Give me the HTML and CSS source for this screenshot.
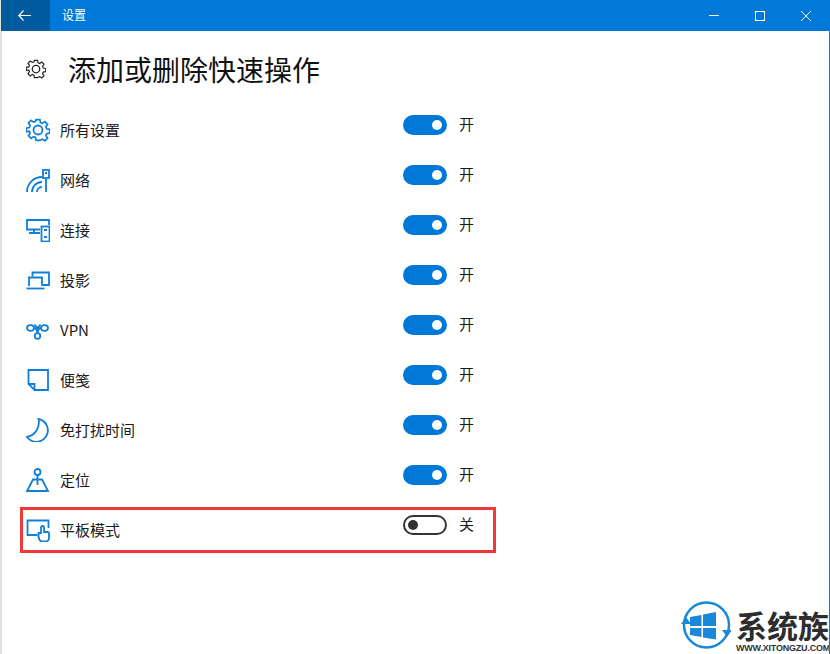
FILE: index.html
```html
<!DOCTYPE html>
<html lang="zh-CN">
  <head>
    <meta charset="utf-8">
    <title>设置</title>
    <link rel="stylesheet" href="styles.css">
  </head>
  <body>
    <div class="window">
      <header class="titlebar">
        <div class="back">
          <svg width="13" height="11" viewBox="0 0 13 11"><path d="M5.500.5.800 5.500l4.700 5M.800 5.500H13" fill="none" stroke="#fff" stroke-width="1.200"/></svg>
        </div>
        <span class="app-name">设置</span>
        <div class="controls">
          <svg width="12" height="12" viewBox="0 0 12 12"><path d="M1 5.500h10" stroke="#fff" fill="none"/></svg>
          <svg width="12" height="12" viewBox="0 0 12 12"><rect x="1.500" y="1.500" width="9" height="9" stroke="#fff" fill="none"/></svg>
          <svg width="12" height="12" viewBox="0 0 12 12"><path d="M1 1l10 10M11 1 1 11" stroke="#fff" fill="none"/></svg>
        </div>
      </header>

      <main class="content">
        <div class="page-head">
          <svg class="head-icon" width="20" height="20" viewBox="0 0 24 24"><use href="#gear"/></svg>
          <h1>添加或删除快速操作</h1>
        </div>

        <div class="list">
          <div class="row">
            <svg class="icon" viewBox="0 0 24 24"><use href="#gear"/></svg>
            <span class="name">所有设置</span>
            <span class="toggle on"></span><span class="state">开</span>
          </div>
          <div class="row">
            <svg class="icon" viewBox="0 0 24 24"><path d="M1 24A15 15 0 0 1 16 9M6 24A10 10 0 0 1 16 14M11 24A5 5 0 0 1 16 19"/><rect x="17" y="2" width="6" height="8"/><path d="M20 10v14M19 5h2"/></svg>
            <span class="name">网络</span>
            <span class="toggle on"></span><span class="state">开</span>
          </div>
          <div class="row">
            <svg class="icon" viewBox="0 0 24 24"><path d="M23 7V2H1v9.500h13M8 11.500V15M3 15h11"/><rect x="15.500" y="8.500" width="8" height="15"/><path d="M18 12h3M18 19h3"/></svg>
            <span class="name">连接</span>
            <span class="toggle on"></span><span class="state">开</span>
          </div>
          <div class="row">
            <svg class="icon" viewBox="0 0 24 24"><path d="M6.500 8.500V4.500h16.500v12.500h-6"/><path d="M3 18V9.500h13V18"/><path d="M.500 20.500h18"/></svg>
            <span class="name">投影</span>
            <span class="toggle on"></span><span class="state">开</span>
          </div>
          <div class="row">
            <svg class="icon" viewBox="0 0 24 24"><ellipse cx="4.500" cy="10" rx="3.500" ry="2.800"/><ellipse cx="18.500" cy="10" rx="3.500" ry="2.800"/><circle cx="11.500" cy="18" r="2.800"/><path d="M8 10c2 0 3 2 3.500 5.200M15 10c-2 0-3 2-3.500 5.200M8.500 6.500l3 3.500 3-3.500"/></svg>
            <span class="name">VPN</span>
            <span class="toggle on"></span><span class="state">开</span>
          </div>
          <div class="row">
            <svg class="icon" viewBox="0 0 24 24"><path d="M2.500 2h19.500v20H8.500l-6-6z"/><path d="M2.500 16h6v6"/></svg>
            <span class="name">便笺</span>
            <span class="toggle on"></span><span class="state">开</span>
          </div>
          <div class="row">
            <svg class="icon" viewBox="0 0 24 24"><path d="M12.500 1A11.500 11.500 0 1 1 1 19 15 15 0 0 0 12.500 1z"/></svg>
            <span class="name">免打扰时间</span>
            <span class="toggle on"></span><span class="state">开</span>
          </div>
          <div class="row">
            <svg class="icon" viewBox="0 0 24 24"><circle cx="11.500" cy="4" r="3"/><path d="M11.500 7v10"/><path d="M7 11.500h9L22 23H1z"/></svg>
            <span class="name">定位</span>
            <span class="toggle on"></span><span class="state">开</span>
          </div>
          <div class="row">
            <svg class="icon" viewBox="0 0 24 24"><path d="M11.500 17H1.500V2.500h21V10"/><path d="M15.500 23.500c-2-1-3-3-3-5.500v-3h2.500V9.500a1.500 1.500 0 0 1 3 0V14h3.500a1.500 1.500 0 0 1 1.500 1.500V20c0 1.500-1 3-2 3.500z"/></svg>
            <span class="name">平板模式</span>
            <span class="toggle off"></span><span class="state">关</span>
          </div>
          <div class="highlight"></div>
        </div>
      </main>

      <div class="watermark">
        <svg class="mark-logo" width="50" height="50" viewBox="0 0 50 50">
          <circle cx="25.500" cy="25" r="22.500" fill="none" stroke="#1a88d8" stroke-width="2.500"/>
          <path d="M0 24l5-7 5 7zM41 30l5 7 5-7z" fill="#1a88d8"/>
          <path d="M9 17l11.500-2v11H9zM22 14.500 35 12v14H22zM9 28h11.500v9L9 35zM22 28h13v11.500l-13-2z" fill="#1a88d8"/>
        </svg>
        <div class="mark-text">
          <span class="mark-name">系统族</span>
          <span class="mark-url">WWW.XITONGZU.COM</span>
        </div>
      </div>
    </div>

    <svg class="defs" width="0" height="0">
      <defs>
        <g id="gear">
          <circle cx="12" cy="12" r="4.500"/>
          <path d="M10 1h4l.6 3.200 2 .8 2.700-1.800 2.800 2.800-1.800 2.700.8 2 3.200.6v4l-3.200.6-.8 2 1.800 2.700-2.800 2.800-2.700-1.800-2 .8L14 23h-4l-.6-3.200-2-.8-2.700 1.800-2.800-2.800 1.800-2.700-.8-2L-.3 14v-4l3.200-.6.800-2L1.900 4.700l2.800-2.800 2.700 1.800 2-.8z" transform="translate(.6 .6) scale(.95)"/>
        </g>
      </defs>
    </svg>
  </body>
</html>
```

FILE: styles.css
```css
* {
  box-sizing: border-box;
}

html,
body {
  margin: 0;
  height: 100%;
}

body {
  font-family: "Noto Sans CJK SC", "Liberation Sans", sans-serif;
  color: #1a1a1a;
  background: #fff;
  overflow: hidden;
}

.window {
  position: relative;
  height: 654px;
  border-left: 2px solid #dfe3e0;
  border-right: 1px solid #0078d7;
}

.titlebar {
  display: flex;
  align-items: center;
  height: 31px;
  margin-left: -1px;
  background: #0078d7;
  color: #fff;
}

.back {
  display: flex;
  align-items: center;
  justify-content: center;
  width: 49px;
  height: 100%;
  padding-right: 2px;
  background: #005a9e;
}

.app-name {
  margin-left: 12px;
  padding-bottom: 2px;
  font-size: 12px;
}

.controls {
  display: flex;
  gap: 34px;
  margin-left: auto;
  padding-right: 17px;
}

.content {
  padding-left: 25px;
}

.page-head {
  display: flex;
  align-items: center;
  height: 74px;
  padding-top: 2px;
}

.head-icon {
  margin-left: -1px;
  fill: none;
  stroke: #222;
  stroke-width: 1.500;
}

h1 {
  margin: 0 0 0 22px;
  font-size: 28px;
  font-weight: 400;
  line-height: 40px;
  color: #111;
}

.list {
  position: relative;
}

.row {
  display: flex;
  align-items: center;
  height: 50px;
  font-size: 15px;
}

.icon {
  flex: none;
  width: 24px;
  height: 24px;
  margin-left: -1px;
  fill: none;
  stroke: #0f7fd9;
  stroke-width: 1.800;
}

.name {
  flex: none;
  width: 343px;
  margin-left: 10px;
  padding-bottom: 2px;
}

.toggle {
  position: relative;
  flex: none;
  align-self: flex-start;
  width: 44px;
  height: 20px;
  margin-top: 10px;
  border-radius: 10px;
}

.toggle::after {
  content: "";
  position: absolute;
  top: 5px;
  width: 10px;
  height: 10px;
  border-radius: 50%;
}

.toggle.on {
  background: #0078d7;
}

.toggle.on::after {
  right: 5px;
  background: #fff;
}

.toggle.off {
  border: 2px solid #333;
}

.toggle.off::after {
  top: 3px;
  left: 3px;
  background: #333;
}

.state {
  align-self: flex-start;
  margin-top: 9px;
  margin-left: 12px;
  font-size: 15px;
  line-height: 20px;
}

.highlight {
  position: absolute;
  left: -7px;
  top: 402px;
  width: 476px;
  height: 46px;
  border: 3px solid #f03a3a;
}

.watermark {
  position: absolute;
  right: 0;
  bottom: 0;
  display: flex;
  gap: 5px;
  width: 148px;
  height: 54px;
  overflow: hidden;
}

.mark-logo {
  flex: none;
}

.mark-text {
  display: flex;
  flex-direction: column;
  white-space: nowrap;
}

.mark-name {
  height: 36px;
  margin-top: 7px;
  font-size: 31px;
  font-weight: 700;
  line-height: 36px;
  color: #2d2d2d;
}

.mark-url {
  font-family: "Liberation Sans", sans-serif;
  font-size: 9px;
  font-weight: 700;
  line-height: 11px;
  letter-spacing: -0.2px;
  color: #333;
}

.defs {
  position: absolute;
}
```
